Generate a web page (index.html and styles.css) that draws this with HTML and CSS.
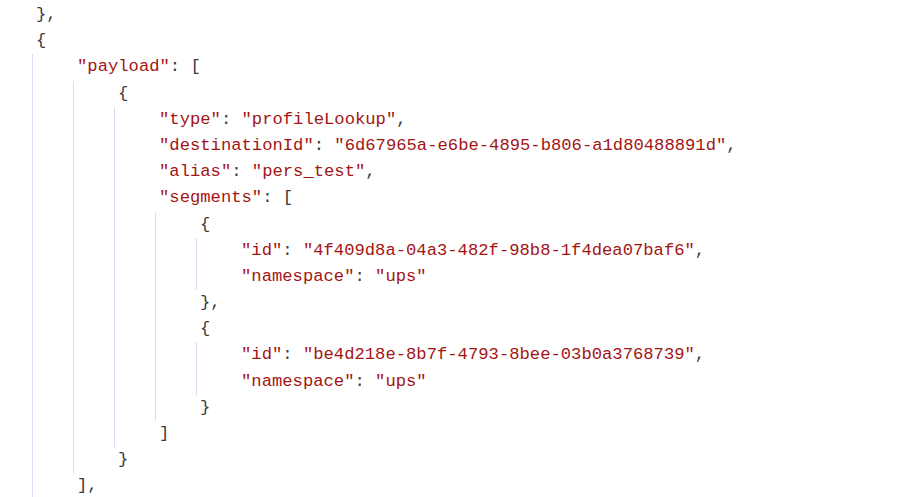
FILE: index.html
```html
<!DOCTYPE html>
<html>
<head>
<meta charset="utf-8">
<link rel="stylesheet" href="styles.css">
</head>
<body>
<div class="code">
  <div class="ln"><span class="p">},</span></div>
  <div class="ln"><span class="p">{</span></div>
  <div class="blk">
    <div class="ln"><span class="s">"payload"</span><span class="p">: [</span></div>
    <div class="blk">
      <div class="ln"><span class="p">{</span></div>
      <div class="blk">
        <div class="ln"><span class="s">"type"</span><span class="p">: </span><span class="s">"profileLookup"</span><span class="p">,</span></div>
        <div class="ln"><span class="s">"destinationId"</span><span class="p">: </span><span class="s">"6d67965a-e6be-4895-b806-a1d80488891d"</span><span class="p">,</span></div>
        <div class="ln"><span class="s">"alias"</span><span class="p">: </span><span class="s">"pers_test"</span><span class="p">,</span></div>
        <div class="ln"><span class="s">"segments"</span><span class="p">: [</span></div>
        <div class="blk">
          <div class="ln"><span class="p">{</span></div>
          <div class="blk">
            <div class="ln"><span class="s">"id"</span><span class="p">: </span><span class="s">"4f409d8a-04a3-482f-98b8-1f4dea07baf6"</span><span class="p">,</span></div>
            <div class="ln"><span class="s">"namespace"</span><span class="p">: </span><span class="s">"ups"</span></div>
          </div>
          <div class="ln"><span class="p">},</span></div>
          <div class="ln"><span class="p">{</span></div>
          <div class="blk">
            <div class="ln"><span class="s">"id"</span><span class="p">: </span><span class="s">"be4d218e-8b7f-4793-8bee-03b0a3768739"</span><span class="p">,</span></div>
            <div class="ln"><span class="s">"namespace"</span><span class="p">: </span><span class="s">"ups"</span></div>
          </div>
          <div class="ln"><span class="p">}</span></div>
        </div>
        <div class="ln"><span class="p">]</span></div>
      </div>
      <div class="ln"><span class="p">}</span></div>
    </div>
    <div class="ln"><span class="p">],</span></div>
  </div>
</div>
</body>
</html>
```
FILE: styles.css
```css
html, body {
  margin: 0;
  padding: 0;
  background: #ffffff;
}
body {
  width: 901px;
  height: 497px;
  overflow: hidden;
}
.code {
  padding-left: 36px;
  padding-top: 2px;
  font-family: "Liberation Mono", "DejaVu Sans Mono", monospace;
  font-size: 17.2px;
  line-height: 26.2px;
  color: #3b3b3b;
}
.ln {
  height: 26.2px;
  white-space: pre;
}
.blk {
  margin-left: -4px;
  padding-left: 44px;
  border-left: 1px solid #d5def0;
}
.s {
  color: #a31515;
}
.p {
  color: #3b3b3b;
}
```
